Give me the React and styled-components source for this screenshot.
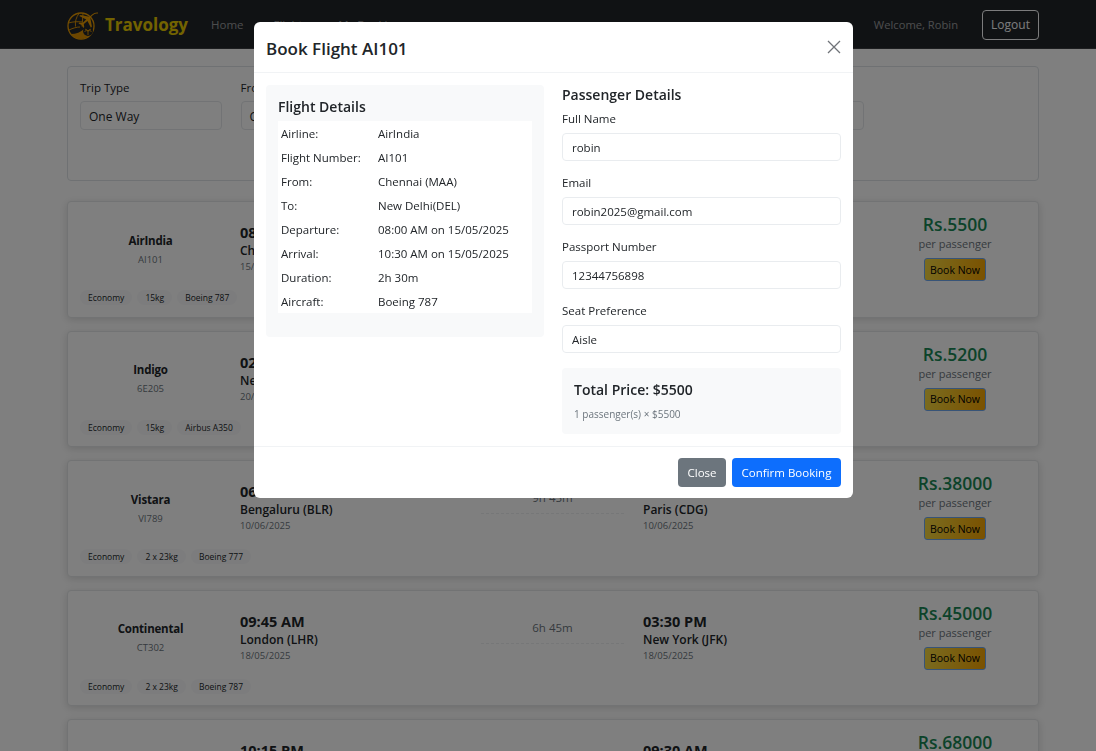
import { createGlobalStyle } from 'styled-components';
import styled from 'styled-components';

const GlobalStyle = createGlobalStyle`
  * {
    box-sizing: border-box;
  }
  html,
  body {
    margin: 0;
    height: 100%;
    overflow: hidden;
    background: #fff;
    font-family: 'Open Sans', 'Liberation Sans', sans-serif;
    color: #212529;
  }
`;

const flights = [
  {
    airline: 'AirIndia',
    code: 'AI101',
    depTime: '08:00 AM',
    from: 'Chennai (MAA)',
    depDate: '15/05/2025',
    duration: '2h 30m',
    arrTime: '10:30 AM',
    to: 'New Delhi(DEL)',
    arrDate: '15/05/2025',
    tags: ['Economy', '15kg', 'Boeing 787'],
    price: 'Rs.5500',
  },
  {
    airline: 'Indigo',
    code: '6E205',
    depTime: '02:15 PM',
    from: 'New Delhi (DEL)',
    depDate: '20/05/2025',
    duration: '2h 45m',
    arrTime: '05:00 PM',
    to: 'Mumbai (BOM)',
    arrDate: '20/05/2025',
    tags: ['Economy', '15kg', 'Airbus A350'],
    price: 'Rs.5200',
  },
  {
    airline: 'Vistara',
    code: 'VI789',
    depTime: '06:30 AM',
    from: 'Bengaluru (BLR)',
    depDate: '10/06/2025',
    duration: '9h 45m',
    arrTime: '04:15 PM',
    to: 'Paris (CDG)',
    arrDate: '10/06/2025',
    tags: ['Economy', '2 x 23kg', 'Boeing 777'],
    price: 'Rs.38000',
  },
  {
    airline: 'Continental',
    code: 'CT302',
    depTime: '09:45 AM',
    from: 'London (LHR)',
    depDate: '18/05/2025',
    duration: '6h 45m',
    arrTime: '03:30 PM',
    to: 'New York (JFK)',
    arrDate: '18/05/2025',
    tags: ['Economy', '2 x 23kg', 'Boeing 787'],
    price: 'Rs.45000',
  },
  {
    airline: 'Emirates',
    code: 'EK512',
    depTime: '10:15 PM',
    from: 'Dubai (DXB)',
    depDate: '22/05/2025',
    duration: '11h 15m',
    arrTime: '09:30 AM',
    to: 'Sydney (SYD)',
    arrDate: '23/05/2025',
    tags: ['Economy', '2 x 23kg', 'Boeing 777'],
    price: 'Rs.68000',
  },
];

const filters = [
  { label: 'Trip Type', value: 'One Way' },
  { label: 'From', value: 'Chennai' },
  { label: 'To', value: 'New Delhi' },
  { label: 'Departure', value: '15/05/2025' },
  { label: 'Passengers', value: '1' },
];

const flightDetails = [
  ['Airline:', 'AirIndia'],
  ['Flight Number:', 'AI101'],
  ['From:', 'Chennai (MAA)'],
  ['To:', 'New Delhi(DEL)'],
  ['Departure:', '08:00 AM on 15/05/2025'],
  ['Arrival:', '10:30 AM on 15/05/2025'],
  ['Duration:', '2h 30m'],
  ['Aircraft:', 'Boeing 787'],
];

const passengerFields = [
  ['Full Name', 'robin'],
  ['Email', 'robin2025@gmail.com'],
  ['Passport Number', '12344756898'],
  ['Seat Preference', 'Aisle'],
];

const Page = styled.div`
  height: 751px;
  overflow: hidden;
`;

const Navbar = styled.nav`
  height: 49px;
  background: #212529;
  border-bottom: 1px solid #3a3d40;
  padding: 1px 57px 0 67px;
  display: flex;
  align-items: center;
`;

const Brand = styled.div`
  display: flex;
  align-items: center;
  gap: 7px;
  width: 144px;
  font-size: 17px;
  font-weight: 700;
  color: #e6c700;
`;

const NavLinks = styled.div`
  display: flex;
  gap: 30px;
  flex: 1;
`;

const NavLink = styled.span`
  font-size: 11.5px;
  font-weight: 500;
  color: rgba(255, 255, 255, 0.55);
`;

const Welcome = styled.span`
  font-size: 11.2px;
  font-weight: 500;
  color: rgba(255, 255, 255, 0.55);
  margin-right: 24px;
`;

const LogoutButton = styled.button`
  width: 57px;
  height: 30px;
  font: inherit;
  font-size: 12px;
  font-weight: 500;
  background: transparent;
  color: #f8f9fa;
  border: 1px solid #f8f9fa;
  border-radius: 4px;
  padding: 0;
`;

const Main = styled.main`
  padding: 17px 57px 0 67px;
`;

const SearchCard = styled.section`
  height: 115px;
  background: #fff;
  border: 1px solid #dee2e6;
  border-radius: 4px;
  padding: 12px;
  margin-bottom: 20px;
  display: grid;
  grid-template-columns: repeat(5, 142px) 1fr;
  column-gap: 18.5px;
  align-content: start;
`;

const FilterLabel = styled.div`
  font-size: 11.5px;
  line-height: 16px;
  margin: 1px 0 5px;
`;

const FilterValue = styled.div`
  height: 29px;
  border: 1px solid #e4e7ea;
  border-radius: 4px;
  font-size: 12px;
  line-height: 30px;
  padding: 0 8px;
`;

const FlightCard = styled.article`
  height: 116.5px;
  background: #fff;
  border: 1px solid #e4e6e8;
  border-radius: 4px;
  box-shadow: 0 2px 8px rgba(0, 0, 0, 0.15);
  margin-bottom: 13px;
  padding: 11px 8px 0 12px;
`;

const FlightRow = styled.div`
  display: grid;
  grid-template-columns: 141px 222px 143px 1fr 150px;
  column-gap: 19px;
  height: 68px;
  align-items: center;
`;

const AirlineCol = styled.div`
  text-align: center;
  padding-top: 4px;
`;

const AirlineName = styled.div`
  font-size: 11.5px;
  font-weight: 700;
  letter-spacing: -0.2px;
  line-height: 17px;
`;

const FlightCode = styled.div`
  font-size: 9.5px;
  line-height: 14px;
  color: #6c757d;
  margin-top: 4px;
`;

const TimeCol = styled.div`
  padding-top: 4px;
`;

const TimeText = styled.div`
  font-size: 14.5px;
  font-weight: 700;
  line-height: 18px;
`;

const RouteText = styled.div`
  font-size: 12px;
  font-weight: 600;
  line-height: 18px;
`;

const DateText = styled.div`
  font-size: 9.5px;
  line-height: 14px;
  color: #6c757d;
`;

const DurationCol = styled.div`
  text-align: center;
  font-size: 11.5px;
  color: #6c757d;
  padding-bottom: 8px;
`;

const DurationLine = styled.div`
  border-top: 1px dashed #eceef0;
  margin-top: 8px;
`;

const PriceCol = styled.div`
  text-align: center;
  align-self: start;
  margin-top: -1px;
`;

const PriceText = styled.div`
  font-size: 17.5px;
  font-weight: 600;
  line-height: 24px;
  margin-bottom: -1px;
  color: #198754;
`;

const PerPassenger = styled.div`
  font-size: 11px;
  line-height: 17px;
  color: #6c757d;
`;

const BookButton = styled.button`
  height: 23px;
  width: 62px;
  margin-top: 6px;
  padding: 0;
  font: inherit;
  font-size: 10.5px;
  color: #000;
  border: 1px solid #6fa8f0;
  border-radius: 3px;
  background: linear-gradient(100deg, #f5d840, #f5a300);
`;

const TagRow = styled.div`
  display: flex;
  gap: 5px;
  margin-top: 9px;
`;

const Tag = styled.span`
  font-size: 8.5px;
  line-height: 15px;
  padding: 0 8px;
  background: #f8f9fa;
  border-radius: 8px;
`;

const Backdrop = styled.div`
  position: fixed;
  inset: 0;
  background: rgba(0, 0, 0, 0.5);
`;

const Modal = styled.div`
  position: fixed;
  top: 22px;
  left: 254px;
  width: 599px;
  height: 476px;
  background: #fff;
  border-radius: 6px;
  display: flex;
  flex-direction: column;
`;

const ModalHeader = styled.header`
  height: 51px;
  flex: none;
  padding: 2px 12px 0;
  border-bottom: 1px solid #f1f3f5;
  display: flex;
  align-items: center;
  justify-content: space-between;
`;

const ModalTitle = styled.h2`
  margin: 0;
  font-size: 17px;
  font-weight: 600;
`;

const CloseIcon = styled.svg`
  width: 14px;
  height: 14px;
  margin: -2px 0 0 0;
  stroke: #6f7378;
  stroke-width: 1.3;
`;

const ModalBody = styled.div`
  flex: 1;
  padding: 12px;
  display: grid;
  grid-template-columns: 278px 279px;
  column-gap: 18px;
  align-items: start;
`;

const DetailPanel = styled.section`
  height: 252px;
  background: #f8f9fa;
  border-radius: 4px;
  padding: 12px;
`;

const DetailTitle = styled.h3`
  margin: 0;
  font-size: 14px;
  font-weight: 600;
  line-height: 20px;
  padding: 0 0 4px;
`;

const DetailTable = styled.div`
  background: #fff;
  padding: 0 3px;
`;

const DetailRow = styled.div`
  display: grid;
  grid-template-columns: 97px 1fr;
  font-size: 11.5px;
  height: 24px;
  line-height: 26px;
`;

const PassengerTitle = styled.h3`
  margin: 0;
  font-size: 14px;
  font-weight: 600;
  line-height: 20px;
`;

const FieldLabel = styled.div`
  font-size: 11.5px;
  line-height: 16px;
  margin: 6px 0 6px;
`;

const FieldValue = styled.div`
  height: 28px;
  border: 1px solid #e9ecef;
  border-radius: 4px;
  font-size: 11.5px;
  line-height: 28px;
  padding: 0 9px;
  margin-bottom: 14px;
`;

const TotalBox = styled.div`
  height: 66px;
  margin-top: 15px;
  padding: 12px;
  background: #f8f9fa;
  border-radius: 4px;
`;

const TotalText = styled.div`
  font-size: 14px;
  font-weight: 600;
  line-height: 20px;
`;

const TotalNote = styled.div`
  font-size: 10px;
  line-height: 14px;
  color: #6c757d;
  margin-top: 7px;
`;

const ModalFooter = styled.footer`
  height: 52px;
  flex: none;
  padding: 0 12px;
  border-top: 1px solid #f1f3f5;
  display: flex;
  justify-content: flex-end;
  align-items: center;
  gap: 6px;
`;

const FooterButton = styled.button`
  height: 29px;
  width: ${(props) => (props.$primary ? '109px' : '48px')};
  padding: 0;
  border: none;
  border-radius: 4px;
  font: inherit;
  font-size: 11.5px;
  color: #fff;
  background: ${(props) => (props.$primary ? '#0d6efd' : '#6c757d')};
`;

const Logo = () => (
  <svg width="31" height="30" viewBox="0 0 31 30" fill="none">
    <circle cx="14" cy="16" r="13" stroke="#e89a00" strokeWidth="1.3" />
    <path d="M12 3.500c-3 4-4 8-3.500 13M1.500 13c5-1.500 9-1.500 14-1M2 20c4-2 8-3 11-3M16 3.500l-1 13" stroke="#e89a00" strokeWidth="0.9" />
    <path d="M4 24c5 0 10-2 13-5 2 3 5 4 9 2-2 4-7 8-12 8-4 0-8-2-10-5z" fill="#d98c00" />
    <circle cx="21" cy="21" r="5" fill="#212529" />
    <path d="M21 25v-4M21 21c-2-1-3 0-3.500 1M21 21c2-1 3 0 3.500 1M21 21c-1-1.500-2-2-3-1.500M21 21c1-1.500 2-2 3-1.500" stroke="#e89a00" strokeWidth="0.9" />
    <path d="M31 2.500c-2-.4-4 .4-6 2l-2.500 2.200-9-1.700-1.300 1 7 3.500-3.700 3.500-3-.4-1 .8 3.200 1.600 1.600 3 .9-.9-.4-3 3.700-3.200 3.400 6.800 1-1.200-1.600-8.800 2.400-2.400c1.400-1.300 2.600-2.200 5.300-1.800z" fill="#e89a00" />
  </svg>
);

export default function App() {
  return (
    <Page>
      <GlobalStyle />
      <Navbar>
        <Brand>
          <Logo />
          Travology
        </Brand>
        <NavLinks>
          <NavLink>Home</NavLink>
          <NavLink>Flights</NavLink>
          <NavLink>My Bookings</NavLink>
        </NavLinks>
        <Welcome>Welcome, Robin</Welcome>
        <LogoutButton>Logout</LogoutButton>
      </Navbar>
      <Main>
        <SearchCard>
          {filters.map((filter) => (
            <div key={filter.label}>
              <FilterLabel>{filter.label}</FilterLabel>
              <FilterValue>{filter.value}</FilterValue>
            </div>
          ))}
        </SearchCard>
        {flights.map((flight) => (
          <FlightCard key={flight.code}>
            <FlightRow>
              <AirlineCol>
                <AirlineName>{flight.airline}</AirlineName>
                <FlightCode>{flight.code}</FlightCode>
              </AirlineCol>
              <TimeCol>
                <TimeText>{flight.depTime}</TimeText>
                <RouteText>{flight.from}</RouteText>
                <DateText>{flight.depDate}</DateText>
              </TimeCol>
              <DurationCol>
                {flight.duration}
                <DurationLine />
              </DurationCol>
              <TimeCol>
                <TimeText>{flight.arrTime}</TimeText>
                <RouteText>{flight.to}</RouteText>
                <DateText>{flight.arrDate}</DateText>
              </TimeCol>
              <PriceCol>
                <PriceText>{flight.price}</PriceText>
                <PerPassenger>per passenger</PerPassenger>
                <BookButton>Book Now</BookButton>
              </PriceCol>
            </FlightRow>
            <TagRow>
              {flight.tags.map((tag) => (
                <Tag key={tag}>{tag}</Tag>
              ))}
            </TagRow>
          </FlightCard>
        ))}
      </Main>
      <Backdrop />
      <Modal>
        <ModalHeader>
          <ModalTitle>Book Flight AI101</ModalTitle>
          <CloseIcon viewBox="0 0 14 14">
            <path d="M1 1l12 12M13 1L1 13" />
          </CloseIcon>
        </ModalHeader>
        <ModalBody>
          <DetailPanel>
            <DetailTitle>Flight Details</DetailTitle>
            <DetailTable>
              {flightDetails.map(([label, value]) => (
                <DetailRow key={label}>
                  <span>{label}</span>
                  <span>{value}</span>
                </DetailRow>
              ))}
            </DetailTable>
          </DetailPanel>
          <div>
            <PassengerTitle>Passenger Details</PassengerTitle>
            {passengerFields.map(([label, value]) => (
              <div key={label}>
                <FieldLabel>{label}</FieldLabel>
                <FieldValue>{value}</FieldValue>
              </div>
            ))}
            <TotalBox>
              <TotalText>Total Price: $5500</TotalText>
              <TotalNote>1 passenger(s) × $5500</TotalNote>
            </TotalBox>
          </div>
        </ModalBody>
        <ModalFooter>
          <FooterButton>Close</FooterButton>
          <FooterButton $primary>Confirm Booking</FooterButton>
        </ModalFooter>
      </Modal>
    </Page>
  );
}
